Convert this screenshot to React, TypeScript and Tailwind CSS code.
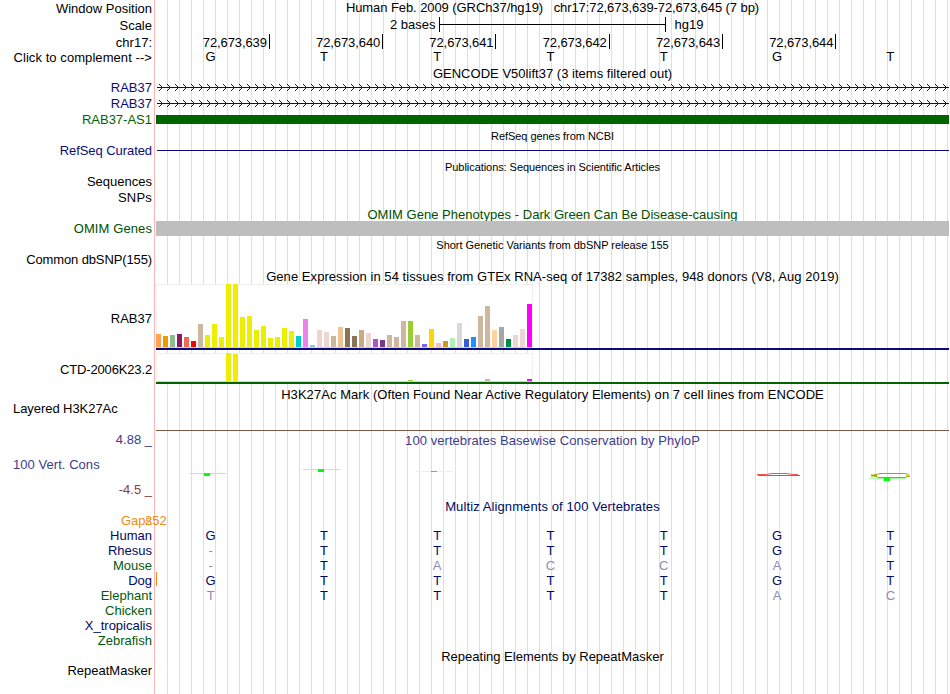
import type { ReactNode } from "react"

const labels = [
    { text: "Window Position", cls: "mt-px" },
    { text: "Scale", cls: "mt-[2px]" },
    { text: "chr17:", cls: "mt-[2px]" },
    { text: "Click to complement -->", cls: "tracking-[0.07px]" },
    { text: "RAB37", cls: "mt-[15px] text-[#0c0c78]" },
    { text: "RAB37", cls: "mt-px text-[#0c0c78]" },
    { text: "RAB37-AS1", cls: "mt-px text-[#006400]" },
    { text: "RefSeq Curated", cls: "mt-4 text-[#0c0c78] tracking-[-0.07px]" },
    { text: "Sequences", cls: "mt-4" },
    { text: "SNPs", cls: "mt-px tracking-[0.2px]" },
    { text: "OMIM Genes", cls: "mt-4 text-[#005000] tracking-[0.1px]" },
    { text: "Common dbSNP(155)", cls: "mt-4 tracking-[-0.12px]" },
    { text: "RAB37", cls: "mt-[44px]" },
    { text: "CTD-2006K23.2", cls: "mt-9 tracking-[-0.15px]" },
    { text: "Layered H3K27Ac", cls: "mt-6 self-start pl-[13px] tracking-[-0.06px]" },
    { text: "4.88 _", cls: "mt-4 text-[#3c3c8c]" },
    { text: "100 Vert. Cons", cls: "mt-[10px] self-start pl-[13px] text-[#3c3c8c] tracking-[0.05px]" },
    { text: "-4.5 _", cls: "mt-[10px] text-[#8c3c3c]" },
    { text: "Gaps", cls: "mt-4 text-[#f08c14]" },
    { text: "Human", cls: "text-[#000a64]" },
    { text: "Rhesus", cls: "text-[#000a64]" },
    { text: "Mouse", cls: "text-[#005a0a]" },
    { text: "Dog", cls: "text-[#000a64]" },
    { text: "Elephant", cls: "text-[#005a0a]" },
    { text: "Chicken", cls: "text-[#005a0a]" },
    { text: "X_tropicalis", cls: "text-[#000a64]" },
    { text: "Zebrafish", cls: "text-[#005a0a]" },
    { text: "RepeatMasker", cls: "mt-[15px]" },
]

// [colour, height]
const gtex: [string, number][] = [
    ["#ffa54f", 13], ["#ee9a00", 11], ["#8fbc8f", 12], ["#8b1c62", 13], ["#ee6a50", 10], ["#ff0000", 6],
    ["#cdb79e", 23], ["#eeee00", 12], ["#eeee00", 23], ["#eeee00", 10], ["#eeee00", 63], ["#eeee00", 63],
    ["#eeee00", 30], ["#eeee00", 31], ["#eeee00", 17], ["#eeee00", 21], ["#eeee00", 9], ["#eeee00", 10],
    ["#eeee00", 19], ["#eeee00", 16], ["#00cdcd", 11], ["#ee82ee", 28], ["#9ac0cd", 2], ["#eed5d2", 17],
    ["#eed5d2", 15], ["#cdb79e", 11], ["#eec591", 20], ["#8b7355", 19], ["#8b7355", 11], ["#cdaa7d", 17],
    ["#eed5d2", 14], ["#b452cd", 8], ["#7a378b", 7], ["#cdb79e", 12], ["#cdb79e", 10], ["#cdb79e", 26],
    ["#9acd32", 26], ["#cdb79e", 12], ["#7a67ee", 3], ["#ffd700", 18], ["#ffb6c1", 4], ["#cd9b1d", 6],
    ["#b4eeb4", 9], ["#d9d9d9", 24], ["#3a5fcd", 8], ["#1e90ff", 10], ["#cdb79e", 31], ["#cdb79e", 41],
    ["#ffd39b", 17], ["#a6a6a6", 20], ["#008b45", 8], ["#eed5d2", 12], ["#eed5d2", 18], ["#ff00ff", 43],
]
const ctdHeights: Record<number, number> = { 10: 28, 11: 27, 36: 1, 47: 2, 53: 2 }
const ctd = gtex.map(([color], i): [string, number] => [color, ctdHeights[i] ?? 0])

const alignments = ["GTTTTGT", "-TTTTGT", "-TACCAT", "GTTTTGT", "TTTTTAC"]
const faded = ["", "0", "02345", "", "056"]

function Title({ children, className = "" }: { children: ReactNode; className?: string }) {
    return <div className={`text-center whitespace-pre leading-[15px] ${className}`}>{children}</div>
}

function Bases({ seq, dim = "", className = "" }: { seq: string; dim?: string; className?: string }) {
    return (
        <div className={`relative -left-[2px] grid grid-cols-7 h-[15px] text-center ${className}`}>
            {seq.split("").map((c, i) => (
                <span key={i} className={dim.includes(String(i)) ? "text-[#8c8cb4]" : ""}>{c}</span>
            ))}
        </div>
    )
}

function Intron({ className }: { className: string }) {
    return (
        <svg className={`block w-[793px] h-[7px] ${className}`} viewBox="0 0 793 7" shapeRendering="crispEdges" fill="#0c0c78">
            <rect x="1" y="3" width="792" height="1" />
            {Array.from({ length: 99 }, (_, i) => (
                <path key={i} d="M3 0h1v1h-1zM4 1h1v1h-1zM5 2h1v1h-1zM5 4h1v1h-1zM4 5h1v1h-1zM3 6h1v1h-1z" transform={`translate(${i * 8} 0)`} />
            ))}
        </svg>
    )
}

function Expression({ bars, className }: { bars: [string, number][]; className: string }) {
    return (
        <div className={`flex items-end gap-[2px] w-[377px] bg-white border border-[#f0f0f0] border-b-[#d3d3d3] ${className}`}>
            {bars.map(([color, height], i) => (
                <div key={i} className="relative -left-px w-[5px] shrink-0" style={{ height, backgroundColor: color }} />
            ))}
        </div>
    )
}

export default function App() {
    return (
        <div className="flex w-[949px] h-[694px] overflow-hidden bg-white text-black text-[13px] leading-[15px] font-['Liberation_Sans',Arial,sans-serif]">
            <div className="relative z-10 flex flex-col items-end w-[154px] pr-[2px] shrink-0 whitespace-pre">
                {labels.map((l, i) => (
                    <div key={i} className={`h-[15px] ${l.cls}`}>{l.text}</div>
                ))}
            </div>
            <div className="w-[795px] pl-px border-l border-[#ffb4b4]">
                <div className="h-[694px] w-[793px] bg-[repeating-linear-gradient(to_right,transparent_0_11px,#dcdcfa_11px_12px)]">
                    <Title className="tracking-[-0.08px]">Human Feb. 2009 (GRCh37/hg19)   chr17:72,673,639-72,673,645 (7 bp)</Title>
                    <div className="flex items-center h-[15px] mt-[2px] pl-[234px]">
                        <span>2 bases</span>
                        <div className="flex items-center w-[227px] h-[15px] ml-[3px] border-x border-black">
                            <div className="h-px w-full bg-black" />
                        </div>
                        <span className="ml-[9px]">hg19</span>
                    </div>
                    <div className="relative left-[0.6px] grid grid-cols-7 h-[15px] mt-[2px] text-right tracking-[-0.1px]">
                        {[639, 640, 641, 642, 643, 644].map((n) => (
                            <span key={n} className="h-[15px] border-r border-black pr-[2px] leading-[17px]">72,673,{n}</span>
                        ))}
                    </div>
                    <Bases seq="GTTTTGT" />
                    <Title className="mt-[2px] tracking-[0.02px]">GENCODE V50lift37 (3 items filtered out)</Title>
                    <Intron className="mt-[3px]" />
                    <Intron className="mt-[9px]" />
                    <div className="h-[9px] mt-2 bg-[#006400]" />
                    <Title className="mt-[5px] text-[11px] tracking-[-0.05px]">RefSeq genes from NCBI</Title>
                    <div className="h-px ml-px mt-[6px] bg-[#0c0c78]" />
                    <Title className="mt-[9px] text-[11px] tracking-[-0.06px]">Publications: Sequences in Scientific Articles</Title>
                    <Title className="mt-[32px] text-[#005000] tracking-[0.03px]">OMIM Gene Phenotypes - Dark Green Can Be Disease-causing</Title>
                    <div className="relative h-[15px] -mt-px bg-[#bebebe]" />
                    <Title className="mt-[2px] text-[11px] tracking-[-0.02px]">Short Genetic Variants from dbSNP release 155</Title>
                    <Title className="mt-4 tracking-[0.06px]">Gene Expression in 54 tissues from GTEx RNA-seq of 17382 samples, 948 donors (V8, Aug 2019)</Title>
                    <Expression bars={gtex} className="h-[64px]" />
                    <div className="h-[2px] bg-[#0c0c78]" />
                    <Expression bars={ctd} className="h-[29px] mt-[3px]" />
                    <div className="h-[2px] bg-[#006400]" />
                    <Title className="mt-[3px] tracking-[0.06px]">H3K27Ac Mark (Often Found Near Active Regulatory Elements) on 7 cell lines from ENCODE</Title>
                    <div className="h-px mt-7 bg-[#7d5a46]" />
                    <Title className="mt-[2px] text-[#3c3c8c] tracking-[0.06px]">100 vertebrates Basewise Conservation by PhyloP</Title>
                    <svg className="block w-[793px] h-[51px]" viewBox="156 448 793 51" fill="none">
                        <g shapeRendering="crispEdges">
                            <path d="M189 473.5h37M303 469.5h37" stroke="#a5faa5" />
                            <path d="M416 471.5h37" stroke="#dcfadc" />
                            <path d="M869 478.5h37" stroke="#a5faa5" />
                            <path d="M204 473h6v3h-6zM318 469h6v3h-6zM431 471h6v1h-6zM884 478h6v3h-6z" fill="#00ff00" />
                            <path d="M758 475.5h42" stroke="#6464ff" />
                        </g>
                        <path d="M757 474.5h9l6-1h14l7 1h5" stroke="#ff5050" />
                        <path d="M909 474.4l-5-.9h-24l-7 2 6 2h25l6-1.4h-4" stroke="#a5a500" />
                        <path d="M871 475.5h6" stroke="#a5a500" strokeWidth="2" />
                    </svg>
                    <Title className="text-[#000a64] tracking-[0.1px]">Multiz Alignments of 100 Vertebrates</Title>
                    <div className="relative h-[14px] text-[#f08c14]">
                        <span className="absolute -left-[11px] -top-px">252</span>
                    </div>
                    <div className="relative text-[#000a64]">
                        {alignments.map((seq, i) => (
                            <Bases key={i} seq={seq} dim={faded[i]} />
                        ))}
                        <div className="absolute left-0 top-[44px] w-px h-[14px] bg-[#f08c14]" />
                    </div>
                    <Title className="mt-[46px]">Repeating Elements by RepeatMasker</Title>
                </div>
            </div>
        </div>
    )
}
